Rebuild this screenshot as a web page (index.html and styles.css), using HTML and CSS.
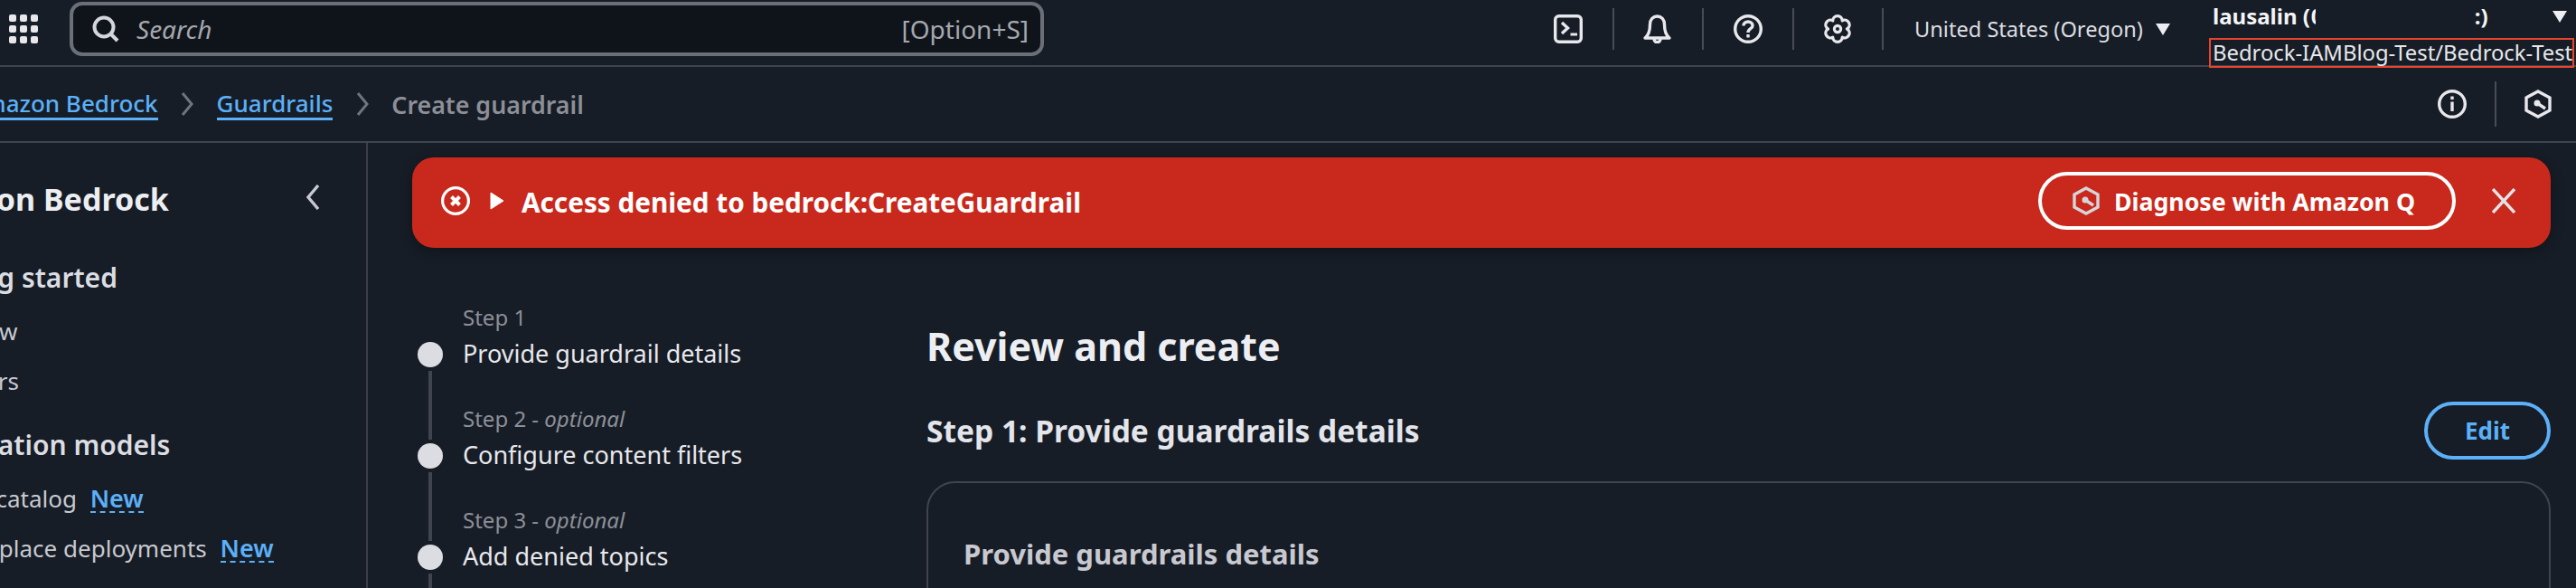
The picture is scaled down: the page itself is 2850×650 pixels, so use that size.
FILE: index.html
```html
<!DOCTYPE html>
<html lang="en">
<head>
    <meta charset="UTF-8">
    <meta name="viewport" content="width=device-width, initial-scale=1.0">
    <title>Create guardrail - Amazon Bedrock</title>
    <link rel="stylesheet" href="styles.css">
</head>
<body>

<header class="top-nav">
    <svg class="apps-icon" viewBox="0 0 32 32" fill="currentColor">
        <rect x="0" y="0" width="8" height="8" rx="2"/><rect x="12" y="0" width="8" height="8" rx="2"/><rect x="24" y="0" width="8" height="8" rx="2"/>
        <rect x="0" y="12" width="8" height="8" rx="2"/><rect x="12" y="12" width="8" height="8" rx="2"/><rect x="24" y="12" width="8" height="8" rx="2"/>
        <rect x="0" y="24" width="8" height="8" rx="2"/><rect x="12" y="24" width="8" height="8" rx="2"/><rect x="24" y="24" width="8" height="8" rx="2"/>
    </svg>
    <div class="search-box">
        <svg class="search-icon" viewBox="0 0 30 30" fill="none" stroke="currentColor" stroke-width="4">
            <circle cx="13" cy="13" r="10.5"/><path d="M20.5 20.5 L28 28"/>
        </svg>
        <span class="search-text">Search</span>
        <span class="search-hint">[Option+S]</span>
    </div>
    <div class="nav-btn">
        <svg class="icon" viewBox="0 0 32 32" fill="none" stroke="currentColor" stroke-width="3.4">
            <rect x="1.7" y="1.7" width="28.6" height="28.6" rx="4"/><path d="M9 9 L15.5 15 L9 21"/><path d="M18.5 22 H26" stroke-width="3"/>
        </svg>
    </div>
    <div class="nav-btn">
        <svg class="icon" viewBox="0 0 32 32" fill="none" stroke="currentColor" stroke-width="3.4" stroke-linejoin="round">
            <path d="M2 26 C6 23 7.5 19 7.5 11 C7.5 5.5 11 2 15.5 2 C20 2 23.5 5.5 23.5 11 C23.5 19 25 23 29 26 Z"/><path d="M12 27 C12 32 19 32 19 27"/>
        </svg>
    </div>
    <div class="nav-btn">
        <svg class="icon" viewBox="0 0 32 32" fill="none" stroke="currentColor" stroke-width="3.4">
            <circle cx="16" cy="16" r="14.3"/><path d="M11 12.5 C11 6.5 21 6.5 21 12.5 C21 16 16 15.5 16 20"/><path d="M16 22 V25.5"/>
        </svg>
    </div>
    <div class="nav-btn">
        <svg class="icon" viewBox="0 0 32 32" fill="none" stroke="currentColor" stroke-width="3.2" stroke-linejoin="round">
            <path d="M21.25 6.9 A5.25 5.25 0 0 1 26.5 16 A5.25 5.25 0 0 1 21.25 25.1 A5.25 5.25 0 0 1 10.75 25.1 A5.25 5.25 0 0 1 5.5 16 A5.25 5.25 0 0 1 10.75 6.9 A5.25 5.25 0 0 1 21.25 6.9 Z"/><circle cx="16" cy="16" r="3.6"/>
        </svg>
    </div>
    <div class="region">United States (Oregon)<span class="caret"></span></div>
    <div class="account">
        <div class="account-name">
            <span>lausalin (</span>
            <span class="account-cut">0</span>
            <span class="account-end">:)</span>
            <span class="caret"></span>
        </div>
        <div class="account-role">Bedrock-IAMBlog-Test/Bedrock-Test</div>
    </div>
</header>

<div class="crumb-bar">
    <a class="crumb" href="#">Amazon Bedrock</a>
    <svg class="crumb-sep" viewBox="0 0 14 26" fill="none" stroke="currentColor" stroke-width="3"><path d="M2 1 L12 13 L2 25"/></svg>
    <a class="crumb" href="#">Guardrails</a>
    <svg class="crumb-sep" viewBox="0 0 14 26" fill="none" stroke="currentColor" stroke-width="3"><path d="M2 1 L12 13 L2 25"/></svg>
    <span class="crumb-current">Create guardrail</span>
    <svg class="info-icon" viewBox="0 0 32 32" fill="none" stroke="currentColor" stroke-width="3.4">
        <circle cx="16" cy="16" r="14.3"/><path d="M16 13.5 V24"/><path d="M16 7.5 V11"/>
    </svg>
    <span class="crumb-divider"></span>
    <svg class="q-icon" viewBox="0 0 30 32" fill="none" stroke="currentColor" stroke-width="3.4">
        <path d="M15 2 L28 9 V23 L15 30 L2 23 V9 Z"/><circle cx="14" cy="15" r="3.5" fill="currentColor" stroke="none"/><path d="M14 15 L23 21"/>
    </svg>
</div>

<div class="layout">
    <nav class="sidebar">
        <div class="side-head">
            <span class="side-title">Amazon Bedrock</span>
            <svg class="side-back" viewBox="0 0 16 28" fill="none" stroke="currentColor" stroke-width="3.4"><path d="M14 1 L3 14 L14 27"/></svg>
        </div>
        <h3 class="side-group">Getting started</h3>
        <a class="side-link side-link-first side-link-short">Overview</a>
        <a class="side-link side-link-short">Providers</a>
        <h3 class="side-group side-group-next">Foundation models</h3>
        <a class="side-link side-link-first">Model catalog <span class="new-tag">New</span></a>
        <a class="side-link">Marketplace deployments <span class="new-tag">New</span></a>
    </nav>

    <main class="content">
        <div class="alert">
            <svg class="alert-icon" viewBox="0 0 32 32" fill="none" stroke="currentColor" stroke-width="3.2">
                <circle cx="16" cy="16" r="14.4"/><path d="M11.5 11.5 L20.5 20.5 M20.5 11.5 L11.5 20.5" stroke-width="4"/>
            </svg>
            <svg class="alert-caret" viewBox="0 0 16 20" fill="currentColor"><path d="M1 1 L15 10 L1 19 Z" stroke="currentColor" stroke-linejoin="round"/></svg>
            <span class="alert-text">Access denied to bedrock:CreateGuardrail</span>
            <button class="diagnose-btn">
                <svg class="q-icon-small" viewBox="0 0 30 32" fill="none" stroke="currentColor" stroke-width="3.4">
                    <path d="M15 2 L28 9 V23 L15 30 L2 23 V9 Z"/><circle cx="14" cy="15" r="3.5" fill="currentColor" stroke="none"/><path d="M14 15 L23 21"/>
                </svg>
                Diagnose with Amazon Q
            </button>
            <svg class="alert-close" viewBox="0 0 26 28" fill="none" stroke="currentColor" stroke-width="3.4"><path d="M1 1 L25 27 M25 1 L1 27"/></svg>
        </div>

        <div class="wizard">
            <ol class="steps">
                <li class="step"><small>Step 1</small><span>Provide guardrail details</span></li>
                <li class="step"><small>Step 2 - <i>optional</i></small><span>Configure content filters</span></li>
                <li class="step"><small>Step 3 - <i>optional</i></small><span>Add denied topics</span></li>
            </ol>
            <section class="review">
                <h1>Review and create</h1>
                <div class="review-head">
                    <h2>Step 1: Provide guardrails details</h2>
                    <button class="edit-btn">Edit</button>
                </div>
                <div class="card">
                    <h3>Provide guardrails details</h3>
                </div>
            </section>
        </div>
    </main>
</div>

</body>
</html>
```

FILE: styles.css
```css
* {
    box-sizing: border-box;
}
html, body {
    height: 650px;
    overflow: hidden;
}
body {
    margin: 0;
    background-color: #161d26;
    color: #e8e8ec;
    font-family: "Noto Sans", sans-serif;
    font-size: 28px;
}
svg {
    display: block;
    flex: none;
}
a {
    text-decoration: none;
}

/* top bar */
.top-nav {
    display: flex;
    align-items: center;
    height: 74px;
    padding-bottom: 8px;
    padding-left: 10px;
    border-bottom: 2px solid #3f444f;
}
.apps-icon {
    width: 32px;
    height: 32px;
    margin-right: 35px;
}
.search-box {
    display: flex;
    align-items: center;
    width: 1078px;
    height: 60px;
    margin-right: 531px;
    padding: 0 13px 0 21px;
    background-color: #0f141a;
    border: 4px solid #6b6f78;
    border-radius: 14px;
    color: #a5a7ae;
}
.search-icon {
    width: 30px;
    height: 30px;
    margin-right: 19px;
    color: #d5d6dc;
}
.search-text {
    font-style: italic;
    font-size: 28px;
}
.search-hint {
    margin-left: auto;
    font-size: 28px;
}
.nav-btn {
    display: flex;
    align-items: center;
    justify-content: center;
    width: 99.5px;
    height: 46px;
    border-right: 2px solid #484c57;
}
.icon {
    width: 32px;
    height: 32px;
}
.region {
    display: flex;
    align-items: center;
    margin-left: 34px;
    width: 326px;
    font-size: 23.6px;
    color: #dcdde2;
}
.caret {
    display: inline-block;
    width: 0;
    height: 0;
    margin-left: 14px;
    border-left: 8px solid transparent;
    border-right: 8px solid transparent;
    border-top: 13px solid #eceef2;
}
.account {
    align-self: flex-start;
    width: 404px;
    height: 75px;
    font-size: 24px;
    line-height: 32px;
}
.account-name {
    display: flex;
    align-items: center;
    height: 42px;
    padding: 0 8px 6px 4px;
    font-weight: 700;
    color: #f4f4f6;
}
.account-cut {
    width: 5px;
    margin-left: 1px;
    overflow: hidden;
}
.account-end {
    margin-left: 176px;
}
.account-name .caret {
    margin-left: auto;
}
.account-role {
    height: 33px;
    padding-left: 2px;
    border: 2px solid #e8432c;
    white-space: nowrap;
    font-size: 23.8px;
    line-height: 28px;
    color: #e8e8ec;
}

/* breadcrumbs */
.crumb-bar {
    display: flex;
    align-items: center;
    height: 84px;
    margin-left: -35px;
    padding-right: 27px;
    border-bottom: 2px solid #3f444f;
}
.crumb {
    color: #5cb0f8;
    font-size: 26px;
    font-weight: 500;
    border-bottom: 3px solid #5cb0f8;
    line-height: 32px;
}
.crumb-sep {
    width: 14px;
    height: 26px;
    margin: 0 25.5px;
    color: #6f7480;
}
.crumb-current {
    color: #8d8f98;
    font-size: 26.8px;
    font-weight: 600;
}
.info-icon {
    width: 32px;
    height: 32px;
    margin-left: auto;
}
.crumb-divider {
    width: 2px;
    height: 50px;
    margin: 0 31px;
    background-color: #484c57;
}
.q-icon {
    width: 30px;
    height: 32px;
}

/* page body */
.layout {
    display: flex;
    height: 492px;
    margin-left: -94px;
}
.sidebar {
    flex: none;
    width: 501px;
    border-right: 2px solid #3a3f4a;
    font-size: 26px;
    color: #c8c9d0;
}
.side-head {
    display: flex;
    justify-content: space-between;
    align-items: center;
    height: 40px;
    margin-top: 42px;
    padding-right: 51px;
}
.side-title {
    margin-left: -4px;
    font-size: 34px;
    font-weight: 700;
    color: #eceef2;
}
.side-back {
    width: 16px;
    height: 28px;
    margin-top: -4px;
}
.side-group {
    margin: 49px 0 0;
    font-size: 30px;
    line-height: 36px;
    font-weight: 600;
    color: #dcdde2;
}
.side-group-next {
    margin-top: 35px;
}
.side-link {
    display: block;
    margin: 19px 0 0 6px;
    line-height: 36px;
}
.side-link-first {
    margin-top: 23px;
}
.side-link-short {
    margin-left: 0;
}
.new-tag {
    display: inline-block;
    margin-left: 8px;
    color: #5cb0f8;
    font-size: 27px;
    font-weight: 600;
    line-height: 28px;
    border-bottom: 2px dashed #5cb0f8;
}

.content {
    flex: 1;
    min-width: 0;
    padding: 16px 28px 0 49px;
}
.alert {
    display: flex;
    align-items: center;
    height: 100px;
    padding: 0 39px 4px 32px;
    background-color: #c9281c;
    border-radius: 24px;
    box-shadow: 0 4px 14px rgba(0, 0, 0, 0.3);
    color: #fff;
}
.alert-icon {
    width: 32px;
    height: 32px;
}
.alert-caret {
    width: 16px;
    height: 20px;
    margin: 0 19px 0 22px;
}
.alert-text {
    margin-top: 3px;
    font-size: 29.7px;
    font-weight: 700;
}
.diagnose-btn {
    display: flex;
    align-items: center;
    height: 64px;
    margin-left: auto;
    padding: 0 41px 0 34px;
    background: none;
    border: 4px solid #fff;
    border-radius: 32px;
    color: #fff;
    font-family: inherit;
    font-size: 26.7px;
    font-weight: 700;
}
.q-icon-small {
    width: 30px;
    height: 32px;
    margin-right: 16px;
    color: #d5d6dc;
}
.alert-close {
    width: 26px;
    height: 28px;
    margin-left: 40px;
    color: #e2e3e8;
}

/* wizard */
.wizard {
    display: flex;
    padding-top: 61px;
}
.steps {
    flex: none;
    width: 569px;
    margin: 0;
    padding: 0;
    list-style: none;
}
.step {
    position: relative;
    height: 112px;
    padding-left: 56px;
    color: #e8e8ec;
}
.step small {
    display: block;
    height: 32px;
    font-size: 24px;
    line-height: 32px;
    color: #8d8f98;
}
.step span {
    display: block;
    margin-top: 6px;
    font-size: 27px;
    line-height: 36px;
}
.step::before {
    content: "";
    position: absolute;
    left: 6px;
    top: 43px;
    width: 28px;
    height: 28px;
    border-radius: 50%;
    background-color: #dcdde2;
}
.step::after {
    content: "";
    position: absolute;
    left: 18px;
    top: 75px;
    width: 4px;
    height: 76px;
    background-color: #3f444f;
}
.review {
    flex: 1;
    min-width: 0;
    padding-top: 20px;
}
.review h1 {
    margin: 0;
    font-size: 43px;
    line-height: 56px;
    font-weight: 700;
    color: #eceef2;
}
.review-head {
    display: flex;
    justify-content: space-between;
    align-items: center;
    margin-top: 33px;
}
.review-head h2 {
    margin: 0;
    font-size: 33.5px;
    font-weight: 700;
    color: #e4e5ea;
}
.edit-btn {
    width: 140px;
    height: 64px;
    background: none;
    border: 4px solid #5cb0f8;
    border-radius: 32px;
    color: #5cb0f8;
    font-family: inherit;
    font-size: 26px;
    font-weight: 700;
}
.card {
    height: 300px;
    margin-top: 24px;
    padding: 57px 39px;
    border: 2px solid #3f444f;
    border-radius: 32px;
}
.card h3 {
    margin: 0;
    font-size: 31px;
    font-weight: 700;
    color: #c8c9d0;
}
```
